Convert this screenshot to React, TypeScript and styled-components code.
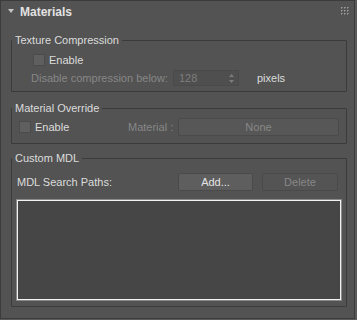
import React from "react";
import styled, { createGlobalStyle } from "styled-components";

const Global = createGlobalStyle`
  html, body {
    margin: 0;
    padding: 0;
    background: #5a5a5a;
  }
  body {
    font-family: "Liberation Sans", Arial, sans-serif;
    font-size: 11px;
    color: #dcdcdc;
  }
`;

const Panel = styled.div`
  box-sizing: border-box;
  width: 355px;
  height: 319px;
  background: #535353;
  border: 1px solid #3c3c3c;
`;

const Header = styled.div`
  display: flex;
  align-items: center;
  height: 22px;
  padding: 0 5px 0 7px;
`;

const Arrow = styled.span`
  width: 0;
  height: 0;
  border-left: 3px solid transparent;
  border-right: 3px solid transparent;
  border-top: 4px solid #c4c4c4;
  margin-right: 6px;
  margin-top: -2px;
`;

const Title = styled.span`
  font-weight: bold;
  font-size: 12px;
  color: #e2e2e2;
`;

const Grip = styled.div`
  margin-left: auto;
  margin-top: -3px;
  display: grid;
  grid-template-columns: repeat(3, 1px);
  gap: 2px;
  padding: 1px;
  span {
    width: 1px;
    height: 1px;
    background: #a0a0a0;
    box-shadow: 1px 0 0 #7c7c7c, 0 1px 0 #7c7c7c;
  }
`;

const Group = styled.fieldset<{ $top: number; $pt: number; $pb: number }>`
  box-sizing: border-box;
  width: 336px;
  margin: ${(p) => p.$top}px 0 0 10px;
  padding: ${(p) => p.$pt}px 0 ${(p) => p.$pb}px 0;
  border: 1px solid #3b3b3b;
  border-radius: 1px;
  min-inline-size: 0;
`;

const Legend = styled.legend`
  padding: 0 3px;
  margin-left: 0;
  line-height: 14px;
  font-size: 11px;
  color: #dcdcdc;
`;

const Row = styled.div<{ $indent: number }>`
  display: flex;
  align-items: center;
  height: 18px;
  padding-left: ${(p) => p.$indent}px;
`;

const Check = styled.span`
  box-sizing: border-box;
  width: 12px;
  height: 12px;
  background: #5f5f5f;
  border: 1px solid #4b4b4b;
  margin-right: 4px;
  flex: none;
`;

const Label = styled.span<{ $dim?: boolean; $w?: number; $ml?: number }>`
  color: ${(p) => (p.$dim ? "#878787" : "#dcdcdc")};
  ${(p) => (p.$w ? `width: ${p.$w}px; flex: none;` : "")}
  margin-left: ${(p) => p.$ml ?? 0}px;
  white-space: nowrap;
`;

const Spinner = styled.div`
  box-sizing: border-box;
  width: 66px;
  height: 16px;
  flex: none;
  display: flex;
  align-items: center;
  justify-content: space-between;
  padding: 0 4px 0 5px;
  background: #4f4f4f;
  border: 1px solid #4a4a4a;
  color: #7d7d7d;
`;

const Button = styled.button<{ $w: number; $kind?: "on" | "off" | "flat"; $ml?: number }>`
  box-sizing: border-box;
  width: ${(p) => p.$w}px;
  height: 18px;
  flex: none;
  margin-left: ${(p) => p.$ml ?? 0}px;
  padding: 0;
  font-family: inherit;
  font-size: 11px;
  border-radius: 2px;
  border: 1px solid #4a4a4a;
  background: ${(p) =>
    p.$kind === "on" ? "#5e5e5e" : p.$kind === "flat" ? "#545454" : "#575757"};
  color: ${(p) => (p.$kind === "on" ? "#e4e4e4" : "#888888")};
`;

const List = styled.div`
  box-sizing: border-box;
  width: 324px;
  height: 100px;
  margin: 9px 0 0 5px;
  background: #464646;
  border: 1px solid #f2f2f2;
  box-shadow: 0 0 0 1px #8a8a8a;
`;

function SpinArrows() {
  return (
    <svg width="5" height="9" viewBox="0 0 5 9">
      <path d="M2.5 0 L5 3 L0 3 Z" fill="#7c7c7c" />
      <path d="M0 6 L5 6 L2.5 9 Z" fill="#7c7c7c" />
    </svg>
  );
}

export default function App() {
  return (
    <>
      <Global />
      <Panel>
        <Header>
          <Arrow />
          <Title>Materials</Title>
          <Grip>
            {Array.from({ length: 9 }).map((_, i) => (
              <span key={i} />
            ))}
          </Grip>
        </Header>

        <Group $top={10} $pt={4} $pb={4}>
          <Legend>Texture Compression</Legend>
          <Row $indent={21}>
            <Check />
            <Label>Enable</Label>
          </Row>
          <Row $indent={19}>
            <Label $dim $w={142}>
              Disable compression below:
            </Label>
            <Spinner>
              <span>128</span>
              <SpinArrows />
            </Spinner>
            <Label $ml={18}>pixels</Label>
          </Row>
        </Group>

        <Group $top={9} $pt={3} $pb={7}>
          <Legend>Material Override</Legend>
          <Row $indent={7}>
            <Check />
            <Label $w={93}>Enable</Label>
            <Label $dim $w={50}>
              Material :
            </Label>
            <Button $w={161}>None</Button>
          </Row>
        </Group>

        <Group $top={7} $pt={8} $pb={6}>
          <Legend>Custom MDL</Legend>
          <Row $indent={5}>
            <Label $w={161}>MDL Search Paths:</Label>
            <Button $w={75} $kind="on">
              Add...
            </Button>
            <Button $w={76} $kind="flat" $ml={9}>
              Delete
            </Button>
          </Row>
          <List />
        </Group>
      </Panel>
    </>
  );
}
